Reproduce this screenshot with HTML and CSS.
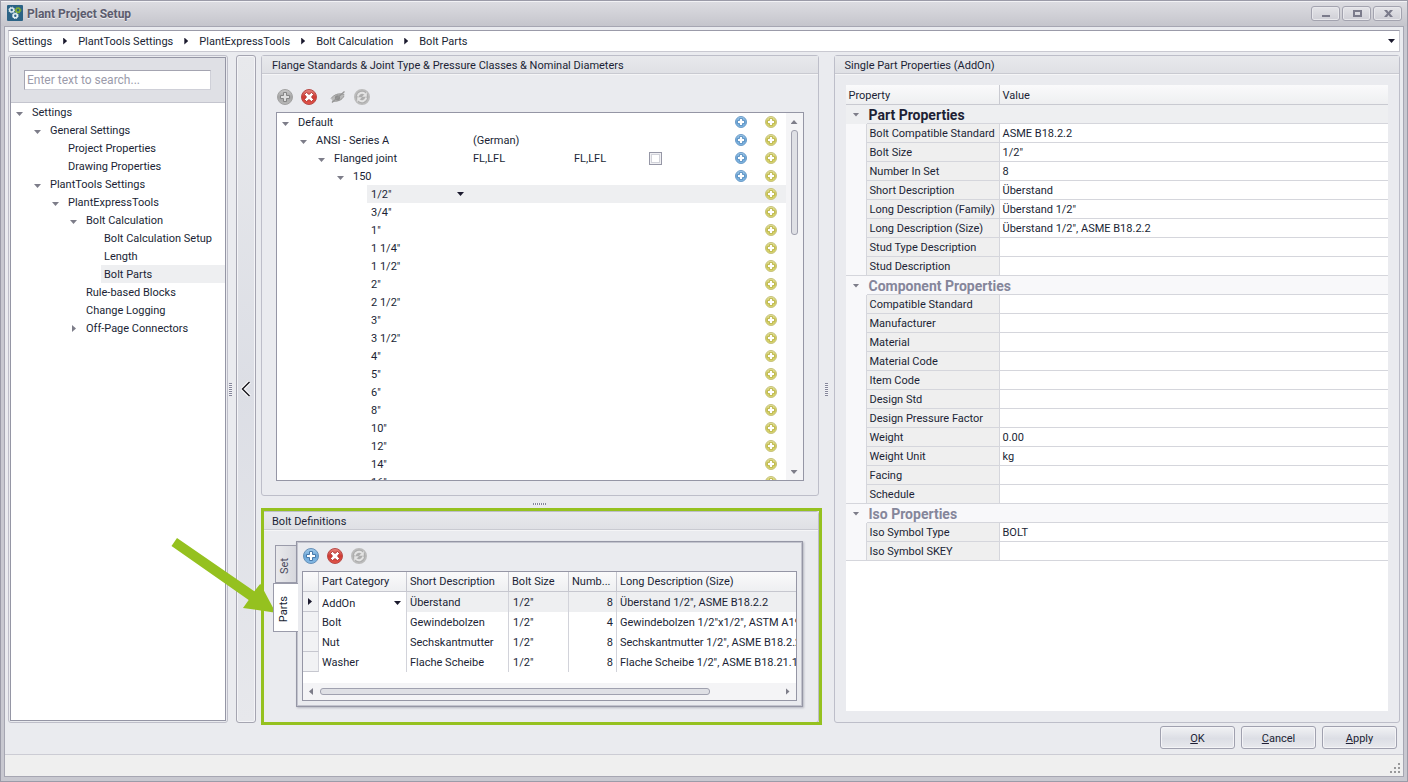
FILE: index.html
```html
<!DOCTYPE html>
<html lang="en">
<head>
<meta charset="utf-8">
<title>Plant Project Setup</title>
<link rel="stylesheet" href="styles.css">
</head>
<body>
<svg class="defs" aria-hidden="true">
  <defs>
    <linearGradient id="g-blue" x1="0" y1="0" x2="0" y2="1"><stop offset="0" stop-color="#a5cdec"/><stop offset=".5" stop-color="#6ba6d8"/><stop offset="1" stop-color="#86bbe6"/></linearGradient>
    <linearGradient id="g-yellow" x1="0" y1="0" x2="0" y2="1"><stop offset="0" stop-color="#e6e4a4"/><stop offset=".5" stop-color="#cfca55"/><stop offset="1" stop-color="#dcd874"/></linearGradient>
    <linearGradient id="g-red" x1="0" y1="0" x2="0" y2="1"><stop offset="0" stop-color="#e88a84"/><stop offset=".5" stop-color="#cf3a32"/><stop offset="1" stop-color="#e2564b"/></linearGradient>
    <linearGradient id="g-gray" x1="0" y1="0" x2="0" y2="1"><stop offset="0" stop-color="#c9c9c9"/><stop offset=".5" stop-color="#a5a5a5"/><stop offset="1" stop-color="#b9b9b9"/></linearGradient>
    <symbol id="i-add-blue" viewBox="0 0 16 16"><circle cx="8" cy="8" r="7.5" fill="url(#g-blue)" stroke="#6690b8"/><path d="M6.5 3.5h3v3h3v3h-3v3h-3v-3h-3v-3h3z" fill="#fff" stroke="#4779ab"/></symbol>
    <symbol id="i-add-gray" viewBox="0 0 16 16"><circle cx="8" cy="8" r="7.5" fill="url(#g-gray)" stroke="#a2a2a2"/><path d="M6.5 3.5h3v3h3v3h-3v3h-3v-3h-3v-3h3z" fill="#dedede" stroke="#858585"/></symbol>
    <symbol id="i-del" viewBox="0 0 16 16"><circle cx="8" cy="8" r="7.5" fill="url(#g-red)" stroke="#b84b48"/><path d="M5.5 3.5L8 5.500l2.500-2 2 2L10.500 8l2 2.500-2 2L8 10.500l-2.500 2-2-2L5.500 8l-2-2.500z" fill="#fff" stroke="#a92d2b" stroke-width=".8"/></symbol>
    <symbol id="i-refresh" viewBox="0 0 16 16"><circle cx="8" cy="8" r="7.200" fill="#adadad" stroke="#bcbcbc" stroke-width="1.600"/><path d="M3.800 7.500A4.300 4.300 0 0 1 11 5M12.200 8.500A4.300 4.300 0 0 1 5 11" fill="none" stroke="#e4e4e4" stroke-width="2"/><path d="M12.800 3v4.800H8zM3.200 13V8.200H8z" fill="#e4e4e4"/></symbol>
    <symbol id="i-eye" viewBox="0 0 16 16"><path d="M1 10C3 5.500 8 3.500 14.500 5 14.500 9 10 13 5 12.500L3.500 12z" fill="#b9b9b9"/><path d="M1 9.500C4 5.500 9 4 14 5.500M2 12C7 13 12 11 14 7" fill="none" stroke="#9b9b9b"/><circle cx="7.500" cy="8.800" r="2.600" fill="#8e8e8e"/><path d="M2 13.500L14.500 2.500" stroke="#969696" stroke-width="1.300"/></symbol>
    <symbol id="i-plus-blue" viewBox="0 0 12 12"><circle cx="6" cy="6" r="5.500" fill="url(#g-blue)" stroke="#6d9cc8"/><path d="M4.500 2.500h3v2h2v3h-2v2h-3v-2h-2v-3h2z" fill="#fff" stroke="#4d86bb" stroke-width=".8"/></symbol>
    <symbol id="i-plus-yellow" viewBox="0 0 12 12"><circle cx="6" cy="6" r="5.500" fill="url(#g-yellow)" stroke="#c6c27c"/><path d="M4.500 2.500h3v2h2v3h-2v2h-3v-2h-2v-3h2z" fill="#fff" stroke="#b5ae3c" stroke-width=".8"/></symbol>
  </defs>
</svg>

<div class="window">
  <header class="titlebar">
    <svg class="logo" viewBox="0 0 16 16" aria-hidden="true"><rect width="16" height="16" rx="1" fill="#2b6386"/><g fill="none" stroke-width="1.600"><circle cx="4.700" cy="5" r="2" stroke="#dbe9ee"/><circle cx="4.700" cy="5" r="2.900" stroke="#dbe9ee" stroke-dasharray="1.100 1.200" stroke-width="1"/><circle cx="11" cy="5.300" r="2" stroke="#7fae35"/><circle cx="11" cy="5.300" r="2.900" stroke="#7fae35" stroke-dasharray="1.100 1.200" stroke-width="1"/><circle cx="8.300" cy="10.700" r="2" stroke="#e4f0f3"/><circle cx="8.300" cy="10.700" r="2.900" stroke="#e4f0f3" stroke-dasharray="1.100 1.200" stroke-width="1"/></g></svg>
    <h1>Plant Project Setup</h1>
    <div class="caption-buttons">
      <button type="button" aria-label="Minimize"><svg viewBox="0 0 10 8"><path d="M1 6h8v2H1z"/></svg></button>
      <button type="button" aria-label="Maximize"><svg viewBox="0 0 10 8"><path fill-rule="evenodd" d="M1 1h9v7H1zM3 3v3h5V3z"/></svg></button>
      <button type="button" aria-label="Close"><svg viewBox="0 0 10 8"><path d="M1 1h3l1.500 2L7 1h3L7 4.500 10 8H7L5.500 6 4 8H1l3-3.500z"/></svg></button>
    </div>
  </header>

  <div class="client">
    <nav class="crumbs" aria-label="Breadcrumb">
      <a href="#">Settings</a><i class="tri right dark"></i>
      <a href="#">PlantTools Settings</a><i class="tri right dark"></i>
      <a href="#">PlantExpressTools</a><i class="tri right dark"></i>
      <a href="#">Bolt Calculation</a><i class="tri right dark"></i>
      <a href="#">Bolt Parts</a>
      <button type="button" class="crumb-drop" aria-label="History"><i class="tri down dark"></i></button>
    </nav>

    <main class="panels">
      <aside class="side">
        <div class="side-inner">
          <div class="search"><input type="text" aria-label="Search" placeholder="Enter text to search..."></div>
          <ul class="nav-tree" role="tree">
            <li class="d0"><i class="tri down"></i><span>Settings</span></li>
            <li class="d1"><i class="tri down"></i><span>General Settings</span></li>
            <li class="d2"><span>Project Properties</span></li>
            <li class="d2"><span>Drawing Properties</span></li>
            <li class="d1"><i class="tri down"></i><span>PlantTools Settings</span></li>
            <li class="d2"><i class="tri down"></i><span>PlantExpressTools</span></li>
            <li class="d3"><i class="tri down"></i><span>Bolt Calculation</span></li>
            <li class="d4"><span>Bolt Calculation Setup</span></li>
            <li class="d4"><span>Length</span></li>
            <li class="d4 current"><span>Bolt Parts</span></li>
            <li class="d3"><span>Rule-based Blocks</span></li>
            <li class="d3"><span>Change Logging</span></li>
            <li class="d3"><i class="tri right"></i><span>Off-Page Connectors</span></li>
          </ul>
        </div>
      </aside>
      <div class="splitter"><i class="grip vertical"></i></div>
      <button type="button" class="collapse" aria-label="Collapse"><svg viewBox="0 0 10 16"><path d="M8.500 1L1.500 8l7 7" fill="none" stroke="#fff" stroke-width="3.500"/><path d="M8.500 1L1.500 8l7 7" fill="none" stroke="#1b1a22" stroke-width="1.500"/></svg></button>

      <div class="middle">
        <section class="group standards">
          <h2>Flange Standards &amp; Joint Type &amp; Pressure Classes &amp; Nominal Diameters</h2>
          <div class="standards-body">
            <div class="toolbar">
              <button type="button" aria-label="Add"><svg><use href="#i-add-gray"/></svg></button>
              <button type="button" aria-label="Delete"><svg><use href="#i-del"/></svg></button>
              <button type="button" class="spaced" aria-label="Hide"><svg><use href="#i-eye"/></svg></button>
              <button type="button" aria-label="Refresh"><svg><use href="#i-refresh"/></svg></button>
            </div>
            <div class="tree-box">
              <div class="tree-view">
                <table class="tree">
                  <colgroup><col class="c-name"><col class="c-a"><col class="c-b"><col class="c-icon"><col><col class="c-icon"><col class="c-icon"></colgroup>
                  <tbody>
                    <tr><td class="t0"><i class="tri down"></i>Default</td><td></td><td></td><td></td><td></td><td><svg><use href="#i-plus-blue"/></svg></td><td><svg><use href="#i-plus-yellow"/></svg></td></tr>
                    <tr><td class="t1"><i class="tri down"></i>ANSI - Series A</td><td>(German)</td><td></td><td></td><td></td><td><svg><use href="#i-plus-blue"/></svg></td><td><svg><use href="#i-plus-yellow"/></svg></td></tr>
                    <tr><td class="t2"><i class="tri down"></i>Flanged joint</td><td>FL,LFL</td><td>FL,LFL</td><td><input type="checkbox" aria-label="Flanged joint option"></td><td></td><td><svg><use href="#i-plus-blue"/></svg></td><td><svg><use href="#i-plus-yellow"/></svg></td></tr>
                    <tr><td class="t3"><i class="tri down"></i>150</td><td></td><td></td><td></td><td></td><td><svg><use href="#i-plus-blue"/></svg></td><td><svg><use href="#i-plus-yellow"/></svg></td></tr>
                    <tr class="picked"><td class="t4"><div class="combo"><select aria-label="Nominal diameter"><option>1/2"</option></select><i class="tri down dark"></i></div></td><td></td><td></td><td></td><td></td><td></td><td><svg><use href="#i-plus-yellow"/></svg></td></tr>
                    <tr><td class="t4">3/4"</td><td></td><td></td><td></td><td></td><td></td><td><svg><use href="#i-plus-yellow"/></svg></td></tr>
                    <tr><td class="t4">1"</td><td></td><td></td><td></td><td></td><td></td><td><svg><use href="#i-plus-yellow"/></svg></td></tr>
                    <tr><td class="t4">1 1/4"</td><td></td><td></td><td></td><td></td><td></td><td><svg><use href="#i-plus-yellow"/></svg></td></tr>
                    <tr><td class="t4">1 1/2"</td><td></td><td></td><td></td><td></td><td></td><td><svg><use href="#i-plus-yellow"/></svg></td></tr>
                    <tr><td class="t4">2"</td><td></td><td></td><td></td><td></td><td></td><td><svg><use href="#i-plus-yellow"/></svg></td></tr>
                    <tr><td class="t4">2 1/2"</td><td></td><td></td><td></td><td></td><td></td><td><svg><use href="#i-plus-yellow"/></svg></td></tr>
                    <tr><td class="t4">3"</td><td></td><td></td><td></td><td></td><td></td><td><svg><use href="#i-plus-yellow"/></svg></td></tr>
                    <tr><td class="t4">3 1/2"</td><td></td><td></td><td></td><td></td><td></td><td><svg><use href="#i-plus-yellow"/></svg></td></tr>
                    <tr><td class="t4">4"</td><td></td><td></td><td></td><td></td><td></td><td><svg><use href="#i-plus-yellow"/></svg></td></tr>
                    <tr><td class="t4">5"</td><td></td><td></td><td></td><td></td><td></td><td><svg><use href="#i-plus-yellow"/></svg></td></tr>
                    <tr><td class="t4">6"</td><td></td><td></td><td></td><td></td><td></td><td><svg><use href="#i-plus-yellow"/></svg></td></tr>
                    <tr><td class="t4">8"</td><td></td><td></td><td></td><td></td><td></td><td><svg><use href="#i-plus-yellow"/></svg></td></tr>
                    <tr><td class="t4">10"</td><td></td><td></td><td></td><td></td><td></td><td><svg><use href="#i-plus-yellow"/></svg></td></tr>
                    <tr><td class="t4">12"</td><td></td><td></td><td></td><td></td><td></td><td><svg><use href="#i-plus-yellow"/></svg></td></tr>
                    <tr><td class="t4">14"</td><td></td><td></td><td></td><td></td><td></td><td><svg><use href="#i-plus-yellow"/></svg></td></tr>
                    <tr><td class="t4">16"</td><td></td><td></td><td></td><td></td><td></td><td><svg><use href="#i-plus-yellow"/></svg></td></tr>
                  </tbody>
                </table>
              </div>
              <div class="scroll-v" aria-hidden="true"><i class="tri up"></i><div class="track"><div class="thumb"></div></div><i class="tri down"></i></div>
            </div>
          </div>
        </section>
        <div class="splitter-h"><i class="grip"></i></div>
        <section class="group bolts">
          <h2>Bolt Definitions</h2>
          <div class="tabbed">
            <div class="tabs" role="tablist">
              <button type="button" role="tab" aria-selected="false" class="tab"><span>Set</span></button>
              <button type="button" role="tab" aria-selected="true" class="tab active"><span>Parts</span></button>
            </div>
            <div class="tab-page" role="tabpanel">
              <div class="toolbar">
                <button type="button" aria-label="Add part"><svg><use href="#i-add-blue"/></svg></button>
                <button type="button" aria-label="Delete part"><svg><use href="#i-del"/></svg></button>
                <button type="button" aria-label="Refresh parts"><svg><use href="#i-refresh"/></svg></button>
              </div>
              <div class="grid-box">
                <table class="parts">
                  <colgroup><col class="p-mark"><col class="p-cat"><col class="p-short"><col class="p-size"><col class="p-num"><col></colgroup>
                  <thead><tr><th></th><th>Part Category</th><th>Short Description</th><th>Bolt Size</th><th>Numb...</th><th>Long Description (Size)</th></tr></thead>
                  <tbody>
                    <tr class="picked"><td><i class="tri right dark"></i></td><td><div class="combo"><select aria-label="Part category"><option>AddOn</option></select><i class="tri down dark"></i></div></td><td>Überstand</td><td>1/2"</td><td>8</td><td>Überstand 1/2", ASME B18.2.2</td></tr>
                    <tr><td></td><td>Bolt</td><td>Gewindebolzen</td><td>1/2"</td><td>4</td><td>Gewindebolzen 1/2"x1/2", ASTM A193</td></tr>
                    <tr><td></td><td>Nut</td><td>Sechskantmutter</td><td>1/2"</td><td>8</td><td>Sechskantmutter 1/2", ASME B18.2.2</td></tr>
                    <tr><td></td><td>Washer</td><td>Flache Scheibe</td><td>1/2"</td><td>8</td><td>Flache Scheibe 1/2", ASME B18.21.1</td></tr>
                  </tbody>
                </table>
                <div class="scroll-h" aria-hidden="true"><i class="tri left"></i><div class="track"><div class="thumb"></div></div><i class="tri right"></i></div>
              </div>
            </div>
          </div>
          <svg class="pointer" viewBox="0 0 105 76" aria-hidden="true"><path d="M6 1L83.300 54.300 89.300 46.700 104.700 75.700 72 71 77.700 63 .500 9z" fill="#95c11f"/></svg>
        </section>
      </div>

      <div class="splitter wide"><i class="grip vertical"></i></div>

      <section class="group props-group">
        <h2>Single Part Properties (AddOn)</h2>
        <div class="props-box">
          <table class="props">
            <colgroup><col class="k-gutter"><col class="k-name"><col></colgroup>
            <thead><tr><th colspan="2">Property</th><th>Value</th></tr></thead>
            <tbody>
              <tr class="cat current"><td><i class="tri down"></i></td><th colspan="2">Part Properties</th></tr>
              <tr><td></td><th>Bolt Compatible Standard</th><td>ASME B18.2.2</td></tr>
              <tr><td></td><th>Bolt Size</th><td>1/2"</td></tr>
              <tr><td></td><th>Number In Set</th><td>8</td></tr>
              <tr><td></td><th>Short Description</th><td>Überstand</td></tr>
              <tr><td></td><th>Long Description (Family)</th><td>Überstand 1/2"</td></tr>
              <tr><td></td><th>Long Description (Size)</th><td>Überstand 1/2", ASME B18.2.2</td></tr>
              <tr><td></td><th>Stud Type Description</th><td></td></tr>
              <tr class="last"><td></td><th>Stud Description</th><td></td></tr>
              <tr class="cat"><td><i class="tri down"></i></td><th colspan="2">Component Properties</th></tr>
              <tr><td></td><th>Compatible Standard</th><td></td></tr>
              <tr><td></td><th>Manufacturer</th><td></td></tr>
              <tr><td></td><th>Material</th><td></td></tr>
              <tr><td></td><th>Material Code</th><td></td></tr>
              <tr><td></td><th>Item Code</th><td></td></tr>
              <tr><td></td><th>Design Std</th><td></td></tr>
              <tr><td></td><th>Design Pressure Factor</th><td></td></tr>
              <tr><td></td><th>Weight</th><td>0.00</td></tr>
              <tr><td></td><th>Weight Unit</th><td>kg</td></tr>
              <tr><td></td><th>Facing</th><td></td></tr>
              <tr class="last"><td></td><th>Schedule</th><td></td></tr>
              <tr class="cat"><td><i class="tri down"></i></td><th colspan="2">Iso Properties</th></tr>
              <tr><td></td><th>Iso Symbol Type</th><td>BOLT</td></tr>
              <tr class="last"><td></td><th>Iso Symbol SKEY</th><td></td></tr>
            </tbody>
          </table>
        </div>
      </section>
    </main>

    <div class="actions">
      <button type="button"><u>O</u>K</button>
      <button type="button"><u>C</u>ancel</button>
      <button type="button"><u>A</u>pply</button>
    </div>
    <footer class="status"><svg viewBox="0 0 10 10" aria-hidden="true"><path d="M8 0h2v2H8zM4 4h2v2H4zM8 4h2v2H8zM0 8h2v2H0zM4 8h2v2H4zM8 8h2v2H8z" fill="#98989a"/></svg></footer>
  </div>
</div>
</body>
</html>
```

FILE: styles.css
```css
* { box-sizing: border-box; }

body {
  margin: 0;
  font: 11px/18px Roboto, "Noto Sans", sans-serif;
  color: #201f35;
  background: #c8c8d0;
}

button, input, select {
  font: inherit;
  color: inherit;
  margin: 0;
  padding: 0;
}

table { border-collapse: separate; border-spacing: 0; table-layout: fixed; width: 100%; }
th, td { padding: 0; text-align: left; font-weight: normal; white-space: nowrap; overflow: hidden; }
.defs { position: absolute; width: 0; height: 0; }

/* Window frame */
.window {
  display: flex;
  flex-direction: column;
  height: 100vh;
  min-height: 780px;
  border: 1px solid #9b9ba8;
  background: #c8c8d0;
}
.titlebar {
  display: flex;
  align-items: center;
  height: 25px;
  padding: 0 4px 0 6px;
  border-top: 1px solid #f2f2f5;
  background: linear-gradient(#dcdce1, #c5c5cc);
}
.logo { width: 16px; height: 16px; margin-bottom: 2px; }
h1 {
  margin: 0 auto 0 4px;
  font-size: 12px;
  font-weight: 700;
  color: #5c5c6e;
  text-shadow: 0 1px 0 #ededf1;
}
.caption-buttons { display: flex; gap: 2px; padding: 0 1px 2px 0; }
.caption-buttons button {
  display: flex;
  align-items: center;
  justify-content: center;
  width: 29px;
  height: 15px;
  border: 1px solid #a3a3af;
  border-radius: 3px;
  background: linear-gradient(#e4e4e8, #cfcfd6);
  box-shadow: inset 0 0 0 1px #e8e8ec;
}
.caption-buttons svg { width: 10px; height: 8px; fill: #7b7b8b; }

.client {
  flex: 1;
  display: flex;
  flex-direction: column;
  min-height: 0;
  margin: 0 3px 4px;
  border: 1px solid #a6a6b2;
  background: #eaebef;
}

/* Expand arrows */
.tri { display: block; flex: none; width: 7px; height: 4px; background: #7d7d89; }
.tri.down { clip-path: polygon(0 0, 100% 0, 50% 100%); }
.tri.up { clip-path: polygon(50% 0, 100% 100%, 0 100%); }
.tri.right { width: 4px; height: 7px; clip-path: polygon(0 0, 100% 50%, 0 100%); }
.tri.left { width: 4px; height: 7px; clip-path: polygon(100% 0, 100% 100%, 0 50%); }
.tri.dark { background: #1b1a2e; }

.crumbs {
  display: flex;
  align-items: center;
  gap: 11px;
  height: 22px;
  margin: 3px;
  padding: 0 4px 0 3px;
  border: 1px solid #c9c9d1;
  border-top-color: #9b9ba9;
  background: #fff;
}
.crumbs a { padding-top: 2px; color: inherit; text-decoration: none; }
.crumbs a:last-of-type { margin-right: auto; }
.crumb-drop { border: 0; background: none; }

.panels { flex: 1; display: flex; min-height: 0; margin: 0 3px; }

/* Settings tree */
.side {
  flex: none;
  display: flex;
  width: 220px;
  padding: 1px;
  border: 1px solid #bebec9;
  border-radius: 3px;
}
.side-inner { flex: 1; border: 1px solid #9596a5; background: #fff; }
.search { padding: 12px 14px 12px 13px; border-bottom: 1px solid #c4c5ce; background: #dfe0e5; }
.search input {
  display: block;
  width: 100%;
  height: 20px;
  padding: 0 2px;
  font-size: 12px;
  border: 1px solid #cfd0d8;
  border-top-color: #a4a4b1;
  border-left-color: #a4a4b1;
  background: #fff;
}
.search input::placeholder { color: #9b9bab; opacity: 1; }
.nav-tree { list-style: none; margin: 0; padding: 0; }
.nav-tree li { position: relative; display: flex; height: 18px; line-height: 20px; }
.nav-tree span { flex: 1; padding-left: 3px; }
.nav-tree .tri { position: absolute; left: -13px; top: 9px; }
.nav-tree .tri.right { left: -11px; top: 6px; }
.nav-tree .d0 { margin-left: 18px; }
.nav-tree .d1 { margin-left: 36px; }
.nav-tree .d2 { margin-left: 54px; }
.nav-tree .d3 { margin-left: 72px; }
.nav-tree .d4 { margin-left: 90px; }
.nav-tree .current { background: #eeeff1; }

.splitter { flex: none; display: flex; align-items: center; justify-content: center; width: 8px; padding-right: 4px; }
.splitter.wide { width: 15px; padding: 0; }
.splitter-h { flex: none; display: flex; align-items: center; justify-content: center; height: 15px; }
.grip { width: 13px; height: 2px; background: repeating-linear-gradient(90deg, #85869a 0 1px, #f4f4f7 1px 2px); }
.grip.vertical { width: 3px; height: 13px; background: repeating-linear-gradient(#85869a 0 1px, #f4f4f7 1px 2px); }

.collapse {
  flex: none;
  width: 20px;
  border: 1px solid #a5a5b1;
  border-radius: 3px;
  background: linear-gradient(#e8e9ec, #dcdee5 50%, #e7e8ec);
  box-shadow: inset 0 0 0 1px #f4f4f7;
}
.collapse svg { display: block; width: 10px; height: 16px; margin: 0 auto; }

/* Group boxes */
.middle { flex: 559 1 0; display: flex; flex-direction: column; min-width: 0; margin-left: 5px; }
.props-group { flex: 566 1 0; min-width: 0; }
.group { display: flex; flex-direction: column; border: 1px solid #bdbec9; border-radius: 3px; }
h2 {
  margin: 0;
  padding: 0 10px;
  height: 18px;
  font-size: 11px;
  line-height: 20px;
  font-weight: 400;
  border-bottom: 1px solid #c9cad1;
  background: linear-gradient(#e8e9ec, #dfe0e5);
  box-shadow: 0 1px 0 #f5f5f7;
}

.toolbar { display: flex; gap: 8px; }
.toolbar button { display: block; border: 0; background: none; }
.toolbar svg { display: block; width: 16px; height: 16px; }
.toolbar .spaced { margin-left: 5px; }

.standards { flex: 1; min-height: 0; }
.standards-body { flex: 1; display: flex; flex-direction: column; gap: 7px; min-height: 0; padding: 15px 14px 14px; }
.standards-body .toolbar { padding-left: 1px; }
.tree-box { flex: 1; display: flex; min-height: 0; border: 1px solid #9596a5; background: #fff; }
.tree-view { flex: 1; overflow: hidden; }
.c-name { width: 193px; }
.c-a { width: 101px; }
.c-b { width: 69px; }
.c-icon { width: 30px; }
.tree td { height: 18px; line-height: 16px; padding: 2px 0 0 3px; }
.tree td:nth-child(n+4) { padding: 0; text-align: center; }
.tree svg { display: block; width: 12px; height: 12px; margin: 0 auto; }
.tree .tri { display: inline-block; margin: 0 9px 0 0; }
.tree .t0 { padding-left: 5px; }
.tree .t1 { padding-left: 23px; }
.tree .t2 { padding-left: 41px; }
.tree .t3 { padding-left: 60px; }
.tree .t4 { padding-left: 94px; }
.tree .picked td:nth-child(n+2) { background: #eeeff1; }
.tree .picked td:first-child { background: linear-gradient(90deg, #fff 90px, #eeeff1 90px); }
.tree input {
  appearance: none;
  display: block;
  width: 13px;
  height: 13px;
  margin: 0 auto;
  border: 1px solid #9697a6;
  background: #fff;
  box-shadow: inset 0 0 0 1px #f0f0f3, inset 0 0 0 2px #d2d3da;
}
.combo { display: flex; align-items: center; padding-right: 6px; }
.combo select { flex: 1; min-width: 0; height: 16px; border: 0; appearance: none; background: transparent; }
.tree .combo .tri { margin: 0 0 2px; }

.scroll-v { flex: none; display: flex; flex-direction: column; align-items: center; gap: 6px; width: 17px; padding: 7px 0 6px; background: #f4f4f6; }
.scroll-v .track { flex: 1; }
.scroll-v .thumb { width: 7px; height: 105px; border: 1px solid #a0a1af; border-radius: 3px; background: #dfe0e5; }
.scroll-h { display: flex; align-items: center; gap: 7px; height: 17px; padding: 0 6px; background: #f4f4f6; }
.scroll-h .track { flex: 1; }
.scroll-h .thumb { width: 85%; height: 7px; border: 1px solid #a0a1af; border-radius: 3px; background: #dfe0e5; }

/* Bolt definitions */
.bolts { position: relative; flex: none; }
.bolts::after {
  content: "";
  position: absolute;
  inset: -4px -4px -3px -1px;
  border: 3px solid #95c11f;
  pointer-events: none;
}
.pointer { position: absolute; left: -91px; top: 25px; width: 105px; height: 76px; }
.tabbed { display: flex; padding: 11px 15px 15px 11px; }
.tabs { flex: none; display: flex; flex-direction: column; align-items: flex-end; width: 25px; padding-top: 4px; margin-right: -2px; }
.tab {
  display: flex;
  align-items: center;
  justify-content: center;
  width: 23px;
  height: 38px;
  padding: 4px 4px 0 0;
  border: 1px solid #9a9baa;
  border-right: 0;
  background: linear-gradient(90deg, #e9e9ec, #d5d6dc);
  color: #4c4b5d;
}
.tab span { writing-mode: vertical-rl; transform: rotate(180deg); }
.tab.active { z-index: 1; width: 25px; height: 49px; padding-right: 4px; background: #fff; color: inherit; }
.tab-page {
  flex: 1;
  display: flex;
  flex-direction: column;
  gap: 7px;
  min-width: 0;
  padding: 6px 5px 5px;
  border: 1px solid #9596a5;
  box-shadow: inset 0 0 0 1px #c3c4ce, 1px 1px 2px #b5b6c0;
}
.tab-page .toolbar { padding-left: 1px; }
.grid-box { border: 1px solid #9596a5; background: #fff; }
.p-mark { width: 16px; }
.p-cat { width: 88px; }
.p-short { width: 102px; }
.p-size { width: 60px; }
.p-num { width: 48px; }
.parts { margin-bottom: 11px; }
.parts th { height: 20px; padding: 1px 3px 0; border-right: 1px solid #c6c7cf; border-bottom: 1px solid #c6c7cf; background: linear-gradient(#fafafb, #eeeff1); }
.parts td { height: 20px; line-height: 18px; padding: 2px 3px 0; border-right: 1px solid #d2d3da; }
.parts td:nth-child(4) { padding-left: 4px; }
.parts td:nth-child(5) { text-align: right; }
.parts th:last-child, .parts td:last-child { border-right: 0; padding-right: 0; }
.parts td:first-child { padding: 0 0 0 5px; border-bottom: 1px solid #c6c7cf; background: #f1f2f4; }
.parts .picked td:nth-child(n+3) { background: #eeeff1; }
.parts .combo { padding-right: 2px; }

/* Properties */
.props-box { flex: 1; margin: 11px; background: #fff; }
.k-gutter { width: 21px; }
.k-name { width: 133px; }
.props th, .props td { height: 19px; line-height: 16px; padding: 2px 3px 0; }
.props thead th { height: 20px; border-right: 1px solid #c9cad1; border-bottom: 1px solid #c9cad1; background: linear-gradient(#fafafb, #eeeff1); }
.props thead th:last-child { border-right: 0; }
.props tbody th { border-right: 1px solid #d5d6dc; border-bottom: 1px solid #d5d6dc; background: #efefef; }
.props tbody td:last-child { border-bottom: 1px solid #d5d6dc; }
.props tbody td:first-child { border-right: 1px solid #d5d6dc; background: #f8f8fa; }
.props .last td:first-child { border-bottom: 1px solid #d5d6dc; }
.props tbody .cat th { padding-left: 2px; border-right: 0; font-size: 14px; font-weight: 700; color: #85869a; background: #f8f8fa; }
.props tbody .cat td { padding: 0 0 0 7px; border-right: 0; }
.props tbody .current th, .props tbody .current td { color: inherit; background: #eeeff1; }

.actions { display: flex; justify-content: flex-end; gap: 6px; padding: 3px 6px 5px; }
.actions button {
  width: 75px;
  height: 23px;
  padding-top: 2px;
  border: 1px solid #a0a1af;
  border-radius: 3px;
  background: linear-gradient(#f1f2f4, #dcdee5 55%, #e8e9ed);
  box-shadow: inset 0 0 0 1px #f4f4f7;
}
.status {
  display: flex;
  align-items: flex-end;
  justify-content: flex-end;
  height: 22px;
  padding: 3px;
  border-top: 1px solid #ccccd4;
  background: #efefef;
}
.status svg { width: 10px; height: 10px; }
```
